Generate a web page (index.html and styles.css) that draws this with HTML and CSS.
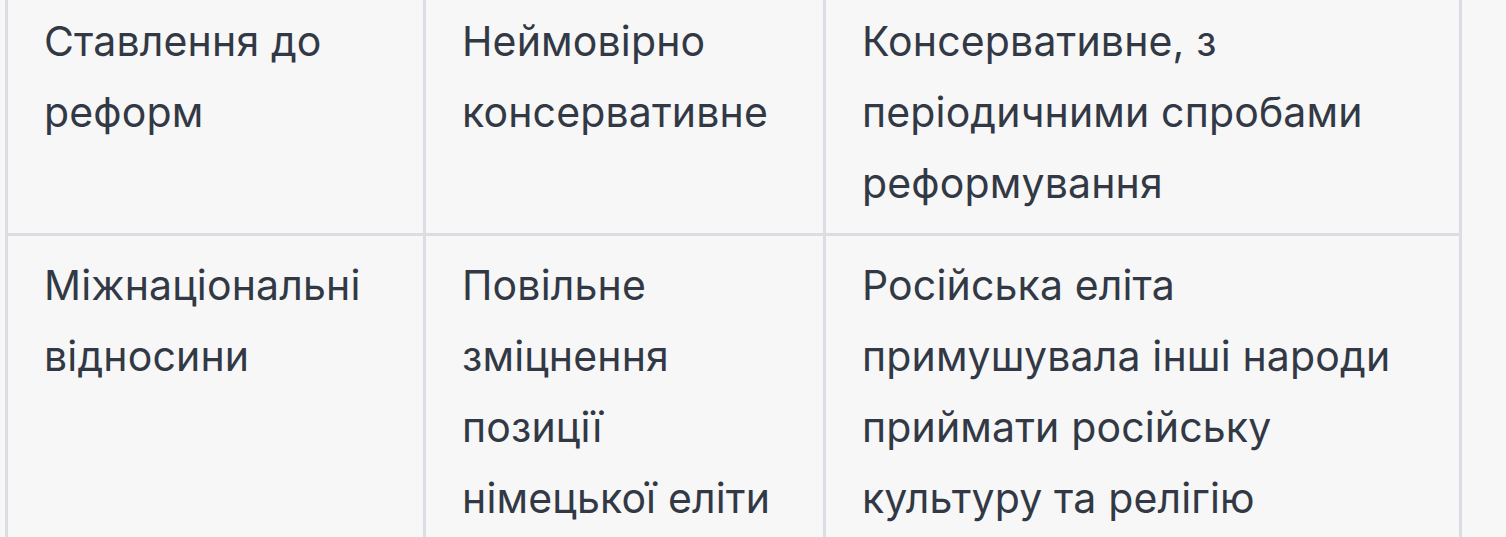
FILE: index.html
```html
<!DOCTYPE html>
<html lang="uk">
<head>
<meta charset="utf-8">
<title>Таблиця</title>
<link rel="stylesheet" href="styles.css">
</head>
<body>
<div class="wrap">
<table class="compare">
  <colgroup>
    <col class="c1">
    <col class="c2">
    <col class="c3">
  </colgroup>
  <tbody>
    <tr>
      <td>Ставлення до реформ</td>
      <td>Неймовірно консервативне</td>
      <td>Консервативне, з періодичними спробами реформування</td>
    </tr>
    <tr>
      <td>Міжнаціональні відносини</td>
      <td>Повільне зміцнення позиції німецької еліти</td>
      <td>Російська еліта примушувала інші народи приймати російську культуру та релігію</td>
    </tr>
  </tbody>
</table>
</div>
</body>
</html>
```

FILE: styles.css
```css
html, body {
  margin: 0;
  padding: 0;
  background: #f7f7f8;
}
body {
  font-family: Inter, "Noto Sans", sans-serif;
  color: #323944;
  overflow: hidden;
}
.wrap {
  padding-left: 5px;
  margin-top: -11px;
}
.compare {
  table-layout: fixed;
  border-collapse: separate;
  border-spacing: 0;
  width: 1457px;
  border-left: 3px solid #dcdce3;
  border-top: 3px solid #dcdce3;
}
.c1 { width: 418px; }
.c2 { width: 400px; }
.c3 { width: 636px; }
.compare td {
  vertical-align: top;
  font-size: 41px;
  letter-spacing: 0.15px;
  line-height: 71px;
  padding: 14px 30px 14px 36px;
  border-right: 3px solid #dcdce3;
  border-bottom: 3px solid #dcdce3;
  background: #f7f7f8;
}
```
